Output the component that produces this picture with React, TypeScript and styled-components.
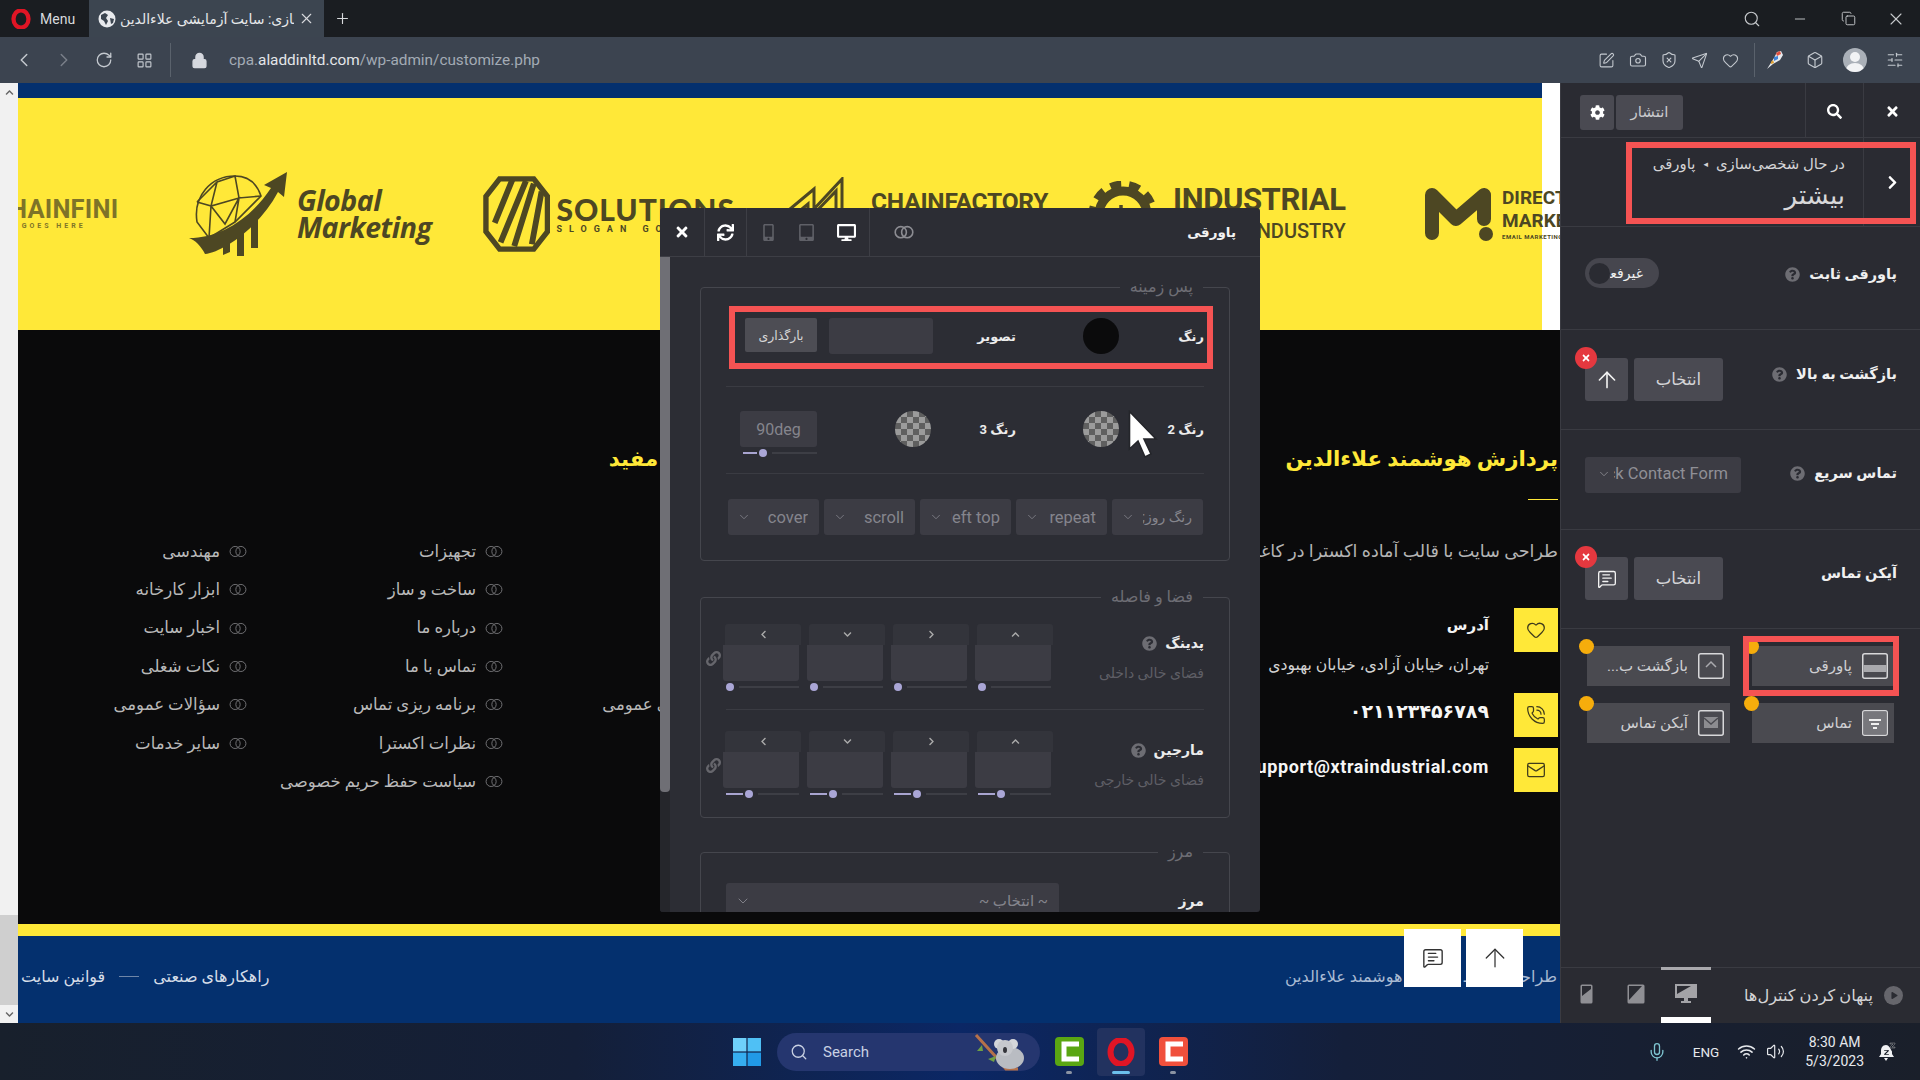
import React from "react";
import styled, { createGlobalStyle } from "styled-components";
import {
  Box,
  Camera,
  ChevronDown,
  ChevronLeft,
  ChevronRight,
  Copy,
  Heart,
  LayoutGrid,
  Lock,
  Mail,
  Mic,
  MessageSquareText,
  Minus,
  PhoneCall,
  Plus,
  RotateCw,
  Search,
  Send,
  ShieldX,
  SlidersHorizontal,
  SquarePen,
  ArrowUp,
  Volume2,
  Wifi,
  X,
} from "lucide-react";
import {
  FaChevronDown,
  FaChevronLeft,
  FaChevronRight,
  FaChevronUp,
  FaCog,
  FaDesktop,
  FaLink,
  FaMobileAlt,
  FaPlay,
  FaQuestionCircle,
  FaSearch,
  FaSync,
  FaTabletAlt,
  FaTimes,
} from "react-icons/fa";

const FONT = `Roboto, "DejaVu Sans", sans-serif`;

const GlobalStyle = createGlobalStyle`
  html, body {
    margin: 0;
    width: 1920px;
    height: 1080px;
    overflow: hidden;
    background: #1a1d21;
    font-family: ${FONT};
  }
  * { box-sizing: border-box; }
  ul { list-style: none; margin: 0; padding: 0; }
`;

const Screen = styled.div`
  width: 1920px;
  height: 1080px;
  display: flex;
  flex-direction: column;
`;

/* browser chrome */
const TabStrip = styled.div`
  height: 37px;
  flex: none;
  display: flex;
  background: #1a1d21;
  color: #d8dadd;
`;

const MenuButton = styled.div`
  width: 89px;
  display: flex;
  align-items: center;
  gap: 9px;
  padding-left: 11px;
  font-size: 14px;
`;

const Tab = styled.div`
  width: 235px;
  display: flex;
  align-items: center;
  background: #3c4550;
  padding: 0 9px;
  gap: 4px;
`;

const TabTitle = styled.span`
  flex: 1;
  min-width: 0;
  overflow: hidden;
  white-space: nowrap;
  font-size: 14px;
  color: #e6e8ea;
  text-align: left;
`;

const NewTab = styled.div`
  width: 36px;
  display: flex;
  align-items: center;
  justify-content: center;
`;

const WindowButtons = styled.div`
  margin-left: auto;
  display: flex;
`;

const WindowButton = styled.div`
  width: 48px;
  display: flex;
  align-items: center;
  justify-content: center;
  color: #c6c9cc;
`;

const AddressBar = styled.div`
  height: 46px;
  flex: none;
  display: flex;
  align-items: center;
  padding: 0 5px 0 4px;
  background: #3c4450;
  color: #c4c9cf;
`;

const NavCell = styled.div<{ $w?: number; $dim?: boolean }>`
  width: ${({ $w }) => $w ?? 40}px;
  height: 30px;
  flex: none;
  display: flex;
  align-items: center;
  justify-content: center;
  opacity: ${({ $dim }) => ($dim ? 0.45 : 1)};
`;

const BarDivider = styled.div<{ $ml: number }>`
  width: 1px;
  height: 34px;
  flex: none;
  margin-left: ${({ $ml }) => $ml}px;
  background: #5a626c;
`;

const LockWrap = styled.div`
  margin: 0 21px 0 20px;
  display: flex;
`;

const Url = styled.div`
  font-size: 15.35px;
  color: #a3abb5;
  b {
    font-weight: 400;
    color: #e4e6e9;
  }
`;

const AddressRight = styled.div`
  margin-left: auto;
  display: flex;
  align-items: center;
`;

const Avatar = styled.div`
  width: 24px;
  height: 24px;
  border-radius: 50%;
  background: #aab0b8;
  position: relative;
  overflow: hidden;
  &::before {
    content: "";
    position: absolute;
    left: 7px;
    top: 4px;
    width: 10px;
    height: 10px;
    border-radius: 50%;
    background: #f2f3f5;
  }
  &::after {
    content: "";
    position: absolute;
    left: 3px;
    top: 15px;
    width: 18px;
    height: 14px;
    border-radius: 50%;
    background: #f2f3f5;
  }
`;

/* page row */
const Workspace = styled.div`
  flex: 1;
  min-height: 0;
  display: flex;
`;

const PageScrollbar = styled.div`
  width: 18px;
  flex: none;
  display: flex;
  flex-direction: column;
  background: #f1f1f1;
  color: #666;
  font-size: 8px;
`;

const ScrollCap = styled.div`
  height: 18px;
  display: flex;
  align-items: center;
  justify-content: center;
`;

const ScrollTrack = styled.div`
  flex: 1;
  display: flex;
  flex-direction: column;
  justify-content: flex-end;
`;

const ScrollThumb = styled.div`
  height: 90px;
  background: #cfcfcf;
`;

const Preview = styled.div`
  width: 1542px;
  flex: none;
  position: relative;
  display: flex;
  flex-direction: column;
  overflow: hidden;
  background: #0a0a0b;
`;

const TopBand = styled.div`
  height: 247px;
  flex: none;
  background: #fff;
  padding-right: 18px;
  display: flex;
  flex-direction: column;
`;

const BlueStrip = styled.div`
  height: 15px;
  background: #04306e;
`;

const LogoStrip = styled.div`
  flex: 1;
  display: flex;
  align-items: center;
  background: #ffe838;
  color: #4d4723;
`;

const Logo = styled.div<{ $ml: number; $w: number; $faded?: boolean }>`
  flex: none;
  display: flex;
  align-items: center;
  margin-left: ${({ $ml }) => $ml}px;
  width: ${({ $w }) => $w}px;
  opacity: ${({ $faded }) => ($faded ? 0.72 : 1)};
`;

const LogoText = styled.div<{ $ml: number; $lift?: number }>`
  display: flex;
  flex-direction: column;
  white-space: nowrap;
  margin-left: ${({ $ml }) => $ml}px;
  margin-bottom: ${({ $lift }) => $lift ?? 0}px;
`;

const HainName = styled.span`
  font: 700 25.5px/24px "Roboto", sans-serif;
  letter-spacing: 0.2px;
`;

const Slogan = styled.span<{ $size?: number; $track?: number }>`
  font: 700 ${({ $size }) => $size ?? 7}px/10px "Roboto", sans-serif;
  letter-spacing: ${({ $track }) => $track ?? 3}px;
`;

const GlobalName = styled.span`
  font: italic 700 28.5px/27px "Open Sans", sans-serif;
  letter-spacing: -0.5px;
`;

const SolutionsName = styled.span`
  font: 900 30px/30px "Lato", sans-serif;
  letter-spacing: 1px;
`;

const FactoryName = styled.span`
  font: 700 24.5px/24px "Roboto", sans-serif;
  letter-spacing: -0.2px;
`;

const IndustrialName = styled.span`
  font: 700 31px/30px "Roboto", sans-serif;
  letter-spacing: -0.4px;
`;

const IndustrySub = styled.span`
  font: 500 20px/24px "Roboto", sans-serif;
  text-align: right;
  margin-top: 4px;
`;

const DirectName = styled.span`
  font: 700 19px/23px "Roboto", sans-serif;
`;

const MarkLift = styled.div<{ $lift: number }>`
  display: flex;
  margin-bottom: ${({ $lift }) => $lift}px;
`;

/* footer */
const FooterBody = styled.div`
  flex: 1;
  display: flex;
  direction: rtl;
  padding: 115px 2px 0 0;
  overflow: hidden;
`;

const InfoColumn = styled.div`
  width: 799px;
  flex: none;
`;

const LinksColumn = styled.div`
  flex: none;
  width: 740px;
`;

const FooterTitle = styled.h3`
  margin: 0;
  font-size: 21.3px;
  line-height: 28px;
  font-weight: 700;
  color: #ffe838;
  white-space: nowrap;
`;

const LinksTitle = styled(FooterTitle)`
  padding-right: 6px;
`;

const TitleRule = styled.div`
  width: 30px;
  height: 1px;
  margin-top: 26px;
  background: #ffe838;
`;

const Description = styled.p`
  margin: 39px 0 0;
  font-size: 17.5px;
  line-height: 24px;
  color: #b4b4b4;
  white-space: nowrap;
`;

const ContactRow = styled.div<{ $mt: number }>`
  display: flex;
  gap: 25px;
  margin-top: ${({ $mt }) => $mt}px;
`;

const ContactIcon = styled.div`
  width: 44px;
  height: 44px;
  flex: none;
  display: flex;
  align-items: center;
  justify-content: center;
  background: #ffe838;
  color: #3f3b1c;
`;

const ContactLabel = styled.div`
  font-size: 15px;
  line-height: 22px;
  margin-top: 6px;
  font-weight: 700;
  color: #f4f4f4;
  white-space: nowrap;
`;

const ContactValue = styled.div`
  font-size: 15.7px;
  line-height: 20px;
  margin-top: 19px;
  color: #d2d2d2;
  white-space: nowrap;
`;

const ContactStrong = styled.div<{ $size: number }>`
  font: 700 ${({ $size }) => $size}px/28px "Roboto", "DejaVu Sans", sans-serif;
  margin-top: 5px;
  letter-spacing: 0.6px;
  color: #f6f6f6;
  white-space: nowrap;
`;

const LinkLists = styled.div`
  display: flex;
  margin-top: 59px;
`;

const LinkList = styled.ul`
  width: 256px;
  flex: none;
`;

const LinkItem = styled.li`
  height: 38.4px;
  display: flex;
  align-items: center;
  gap: 9px;
  font-size: 16.5px;
  color: #b9b9b9;
  white-space: nowrap;
`;

const LinkBullet = styled.span`
  display: flex;
  color: #77777a;
`;

const YellowBand = styled.div`
  height: 12px;
  flex: none;
  background: #ffe838;
`;

const BottomBar = styled.div`
  height: 87px;
  flex: none;
  direction: rtl;
  display: flex;
  align-items: center;
  justify-content: space-between;
  padding: 0 3px 6px;
  background: #04306e;
  font-size: 16px;
  color: #a9bad3;
  white-space: nowrap;
`;

const BottomLinks = styled.div`
  display: flex;
  align-items: center;
  gap: 14px;
  color: #d6dde8;
`;

const BottomDash = styled.span`
  width: 20px;
  height: 1px;
  background: #6f86a8;
`;

const FloatButtons = styled.div`
  position: absolute;
  right: 37px;
  bottom: 36px;
  display: flex;
  gap: 5px;
`;

const FloatButton = styled.div`
  width: 57px;
  height: 58px;
  display: flex;
  align-items: center;
  justify-content: center;
  background: #fff;
  color: #333;
`;

/* floating editor */
const Dialog = styled.div`
  position: absolute;
  left: 642px;
  top: 125px;
  width: 600px;
  height: 704px;
  display: flex;
  flex-direction: column;
  overflow: hidden;
  border-radius: 3px;
  background: #2c2d34;
  color: #8a8a92;
`;

const DialogHeader = styled.div`
  height: 49px;
  flex: none;
  display: flex;
  align-items: stretch;
  border-bottom: 1px solid #3d3e45;
`;

const HeaderCell = styled.div<{ $w: number }>`
  width: ${({ $w }) => $w}px;
  flex: none;
  display: flex;
  align-items: center;
  justify-content: center;
  border-right: 1px solid #3d3e45;
  color: #fff;
`;

const DeviceGroup = styled.div`
  width: 123px;
  flex: none;
  display: flex;
  align-items: center;
  justify-content: space-around;
  padding: 0 2px;
  border-right: 1px solid #3d3e45;
`;

const DeviceIcon = styled.span<{ $on?: boolean }>`
  display: flex;
  color: ${({ $on }) => ($on ? "#fff" : "#5f6067")};
`;

const CompareWrap = styled.div`
  display: flex;
  align-items: center;
  margin-left: 24px;
  color: #8c8c92;
`;

const DialogTitle = styled.div`
  margin-left: auto;
  padding-right: 24px;
  display: flex;
  align-items: center;
  font-size: 13.5px;
  font-weight: 700;
  color: #f2f2f2;
`;

const DialogBody = styled.div`
  flex: 1;
  min-height: 0;
  display: flex;
`;

const DialogRail = styled.div`
  width: 10px;
  flex: none;
  background: #25262b;
`;

const RailThumb = styled.div`
  height: 535px;
  background: #6f6f75;
  border-radius: 0 0 4px 4px;
`;

const DialogContent = styled.div`
  flex: 1;
  min-width: 0;
  padding: 21px 30px 0;
  display: flex;
  flex-direction: column;
  gap: 27px;
  overflow: hidden;
  direction: rtl;
`;

const Group = styled.fieldset<{ $mt?: number }>`
  margin: ${({ $mt }) => $mt ?? 0}px 0 0;
  padding: 0 25px;
  min-width: 0;
  flex: none;
  border: 1px solid #45464d;
  border-radius: 4px;
`;

const GroupLegend = styled.legend`
  margin-right: 1px;
  padding: 0 10px;
  font-size: 16px;
  line-height: 18px;
  color: #6e6e75;
`;

const ColorRow = styled.div<{ $pt: number; $pb: number; $line?: boolean }>`
  display: grid;
  grid-template-columns: 188px 1fr;
  padding: ${({ $pt }) => $pt}px 0 ${({ $pb }) => $pb}px;
  border-bottom: ${({ $line }) => ($line ? "1px solid #3a3b42" : "none")};
`;

const Framed = styled.div`
  position: relative;
  grid-column: 1 / -1;
  display: grid;
  grid-template-columns: 188px 1fr;
`;

const RedFrame = styled.div<{ $t: number; $b: number; $l: number; $r: number }>`
  position: absolute;
  top: ${({ $t }) => $t}px;
  bottom: ${({ $b }) => $b}px;
  left: ${({ $l }) => $l}px;
  right: ${({ $r }) => $r}px;
  border: 6px solid #f55353;
  pointer-events: none;
  z-index: 3;
`;

const ColorCell = styled.div`
  display: flex;
  align-items: flex-start;
`;

const ColorLabel = styled.div<{ $w?: number }>`
  width: ${({ $w }) => $w ?? 85}px;
  flex: none;
  height: 36px;
  display: flex;
  align-items: center;
  font-size: 13px;
  font-weight: 700;
  color: #ececec;
  white-space: nowrap;
`;

const Swatch = styled.div<{ $empty?: boolean }>`
  width: 36px;
  height: 36px;
  flex: none;
  border-radius: 50%;
  background: ${({ $empty }) =>
    $empty ? "repeating-conic-gradient(#9b9b9b 0 25%, #5f5f5f 0 50%) 0 0 / 12px 12px" : "#0b0b0c"};
`;

const ImageField = styled.div`
  width: 104px;
  height: 36px;
  flex: none;
  border-radius: 3px;
  background: #3c3c44;
`;

const UploadButton = styled.div`
  width: 72px;
  height: 34px;
  margin-right: 12px;
  flex: none;
  display: flex;
  align-items: center;
  justify-content: center;
  border-radius: 2px;
  background: #4d4d54;
  font-size: 12.5px;
  color: #d6d6d6;
`;

const AngleBlock = styled.div`
  width: 77px;
  flex: none;
  margin-right: auto;
  margin-left: 14px;
`;

const AngleField = styled.div`
  height: 36px;
  display: flex;
  align-items: center;
  justify-content: center;
  border-radius: 3px;
  background: #3c3c44;
  font-size: 16px;
  color: #85858d;
`;

const SliderLine = styled.div`
  direction: ltr;
  display: flex;
  align-items: center;
  height: 8px;
  gap: 2px;
  margin-top: 2px;
  padding-left: 3px;
`;

const SliderFill = styled.span<{ $w: number }>`
  width: ${({ $w }) => $w}px;
  height: 2px;
  flex: none;
  background: #a8a4d0;
`;

const SliderThumb = styled.span`
  width: 8px;
  height: 8px;
  flex: none;
  border-radius: 50%;
  background: #aaa6d6;
`;

const SliderRest = styled.span`
  flex: 1;
  height: 2px;
  margin-left: 3px;
  background: #3d3e45;
`;

const SelectRow = styled.div`
  display: grid;
  grid-template-columns: repeat(5, 91px);
  gap: 5px;
  padding: 25px 1px 25px 3px;
`;

const SelectBox = styled.div`
  height: 36px;
  display: flex;
  align-items: center;
  gap: 8px;
  padding: 0 11px 0 9px;
  border-radius: 3px;
  background: #3c3c44;
  color: #85858d;
  font-size: 16.5px;
`;

const SelectText = styled.span<{ $size?: number }>`
  flex: 1;
  min-width: 0;
  overflow: hidden;
  white-space: nowrap;
  text-align: right;
  font-size: ${({ $size }) => ($size ? `${$size}px` : "inherit")};
`;

const SpacingRow = styled.div<{ $pt: number; $pb: number; $line?: boolean }>`
  display: flex;
  padding: ${({ $pt }) => $pt}px 0 ${({ $pb }) => $pb}px;
  border-bottom: ${({ $line }) => ($line ? "1px solid #3a3b42" : "none")};
`;

const SpacingLabel = styled.div`
  width: 153px;
  flex: none;
  padding-top: 7px;
`;

const LabelLine = styled.div`
  display: flex;
  align-items: center;
  gap: 8px;
  height: 24px;
  font-size: 14px;
  font-weight: 700;
  color: #ececec;
`;

const HelpDot = styled.span<{ $c?: string }>`
  display: flex;
  color: ${({ $c }) => $c ?? "#6d6d73"};
`;

const SubLabel = styled.div`
  margin-top: 8px;
  font-size: 14px;
  line-height: 20px;
  color: #5f5f66;
  white-space: nowrap;
`;

const SpacingCols = styled.div`
  display: flex;
  gap: 8px;
  position: relative;
`;

const SideCol = styled.div`
  width: 76px;
  flex: none;
`;

const SideTab = styled.div`
  height: 21px;
  margin: 0 -2px 0 2px;
  display: flex;
  align-items: center;
  justify-content: center;
  border-radius: 3px 3px 0 0;
  background: #33343b;
  color: #aaa;
`;

const SideInput = styled.div`
  height: 36px;
  border-radius: 0 0 3px 3px;
  background: #3c3c44;
`;

const LinkGlyph = styled.div`
  display: flex;
  align-items: flex-start;
  margin: 27px -6px 0 0;
  color: #66666c;
`;

const BorderRow = styled.div`
  display: flex;
  align-items: center;
  padding-top: 22px;
`;

const BorderLabel = styled.div`
  width: 145px;
  flex: none;
  font-size: 14px;
  font-weight: 700;
  color: #ececec;
`;

const BorderSelect = styled(SelectBox)`
  width: 336px;
  font-size: 15px;
`;

const Pointer = styled.svg`
  position: absolute;
  left: 1110px;
  top: 327px;
`;

/* side panel */
const Panel = styled.aside`
  width: 360px;
  flex: none;
  display: flex;
  flex-direction: column;
  direction: rtl;
  background: #2a2b32;
  color: #efefef;
  border-left: 1px solid #3a3b42;
`;

const PanelTop = styled.div`
  height: 55px;
  flex: none;
  display: flex;
  border-bottom: 1px solid #3a3b42;
`;

const TopCell = styled.div<{ $w: number; $pt?: number }>`
  width: ${({ $w }) => $w}px;
  flex: none;
  display: flex;
  align-items: center;
  justify-content: center;
  padding-top: ${({ $pt }) => $pt ?? 0}px;
  border-left: 1px solid #3a3b42;
  color: #fff;
`;

const PublishGroup = styled.div`
  margin-right: auto;
  padding: 4px 0 0 19px;
  direction: ltr;
  display: flex;
  align-items: center;
  gap: 2px;
`;

const GearButton = styled.div`
  width: 34px;
  height: 35px;
  display: flex;
  align-items: center;
  justify-content: center;
  border-radius: 3px;
  background: #4a4a52;
  color: #fff;
`;

const PublishButton = styled.div`
  width: 67px;
  height: 35px;
  display: flex;
  align-items: center;
  justify-content: center;
  border-radius: 3px;
  background: #4a4a52;
  font-size: 15px;
  color: #c9c9cc;
`;

const Crumb = styled.div`
  height: 89px;
  flex: none;
  position: relative;
  display: flex;
  border-bottom: 1px solid #3a3b42;
`;

const CrumbText = styled.div`
  padding: 16px 18px 0 0;
`;

const CrumbPath = styled.div`
  display: flex;
  align-items: center;
  gap: 8px;
  font-size: 14.9px;
  line-height: 20px;
  color: #d4d4d6;
`;

const CrumbMarker = styled.span`
  font-size: 9px;
`;

const CrumbTitle = styled.div`
  font-size: 26px;
  line-height: 36px;
  margin-top: 3px;
  color: #d8d8da;
`;

const Row = styled.div<{ $h: number; $pt: number }>`
  height: ${({ $h }) => $h}px;
  flex: none;
  display: flex;
  align-items: flex-start;
  justify-content: space-between;
  padding: ${({ $pt }) => $pt}px 23px 0 24px;
  border-bottom: 1px solid #3a3b42;
`;

const RowLabel = styled.div`
  display: flex;
  align-items: center;
  gap: 9px;
  height: 32px;
  font-size: 14.5px;
  font-weight: 700;
  color: #f0f0f0;
  white-space: nowrap;
`;

const Toggle = styled.div`
  width: 74px;
  height: 30px;
  direction: ltr;
  display: flex;
  align-items: center;
  overflow: hidden;
  border-radius: 15px;
  padding-left: 4px;
  background: #46464e;
`;

const ToggleKnob = styled.span`
  width: 21px;
  height: 21px;
  flex: none;
  border-radius: 50%;
  background: #2a2b32;
`;

const ToggleText = styled.span`
  flex: 1;
  min-width: 0;
  overflow: hidden;
  direction: rtl;
  padding-right: 16px;
  font-size: 14px;
  white-space: nowrap;
  text-align: right;
  color: #f0f0f0;
`;

const PickGroup = styled.div`
  display: flex;
  gap: 6px;
`;

const PickButton = styled.div`
  width: 89px;
  height: 43px;
  display: flex;
  align-items: center;
  justify-content: center;
  border-radius: 3px;
  background: #4a4a52;
  font-size: 16.5px;
  color: #d5d5d8;
`;

const PickIcon = styled.div`
  width: 43px;
  height: 43px;
  position: relative;
  display: flex;
  align-items: center;
  justify-content: center;
  border-radius: 3px;
  background: #4a4a52;
  color: #f2f2f2;
`;

const RemoveBadge = styled.span`
  position: absolute;
  left: -10px;
  top: -11px;
  width: 22px;
  height: 22px;
  display: flex;
  align-items: center;
  justify-content: center;
  border-radius: 50%;
  background: #e5383f;
  color: #fff;
`;

const PanelSelect = styled.div`
  width: 156px;
  height: 36px;
  display: flex;
  align-items: center;
  gap: 3px;
  padding: 0 13px 3px 12px;
  overflow: hidden;
  border-radius: 3px;
  background: #3c3c44;
  color: #8f8f96;
  font-size: 16.5px;
`;

const CardGrid = styled.div`
  display: grid;
  grid-template-columns: 142px 143px;
  column-gap: 22px;
  row-gap: 17px;
  padding: 17px 26px 0 0;
`;

const Card = styled.div`
  height: 40px;
  position: relative;
  display: flex;
  align-items: center;
  gap: 10px;
  padding-right: 6px;
  background: #4a4a50;
  font-size: 15px;
  color: #cfcfd2;
  white-space: nowrap;
`;

const CardDot = styled.span`
  position: absolute;
  left: -8px;
  top: -7px;
  width: 15px;
  height: 15px;
  border-radius: 50%;
  background: #f6ad0c;
`;

const CardIcon = styled.svg`
  flex: none;
`;

const PanelFoot = styled.div`
  margin-top: auto;
  height: 56px;
  flex: none;
  display: flex;
  align-items: stretch;
  border-top: 1px solid #3a3b42;
`;

const HideControls = styled.div`
  display: flex;
  align-items: center;
  gap: 11px;
  padding-right: 17px;
  font-size: 16.2px;
  color: #d4d4d6;
  white-space: nowrap;
`;

const PlayDot = styled.span`
  width: 19px;
  height: 19px;
  display: flex;
  align-items: center;
  justify-content: center;
  border-radius: 50%;
  background: #66666c;
  color: #2a2b32;
`;

const PlayGlyph = styled(FaPlay)`
  transform: translateX(1px);
`;

const FootTabs = styled.div`
  margin-right: auto;
  direction: ltr;
  display: flex;
`;

const FootTab = styled.div<{ $on?: boolean }>`
  width: 50px;
  display: flex;
  align-items: center;
  justify-content: center;
  margin-top: ${({ $on }) => ($on ? "-1px" : "0")};
  border-top: 3px solid ${({ $on }) => ($on ? "#a9a9ad" : "transparent")};
  border-bottom: 6px solid ${({ $on }) => ($on ? "#fff" : "transparent")};
`;

/* windows taskbar */
const Taskbar = styled.div`
  height: 57px;
  flex: none;
  display: grid;
  grid-template-columns: 1fr auto 1fr;
  align-items: center;
  background: linear-gradient(90deg, #18202c 0%, #141f38 30%, #0b2765 50%, #141f3a 70%, #1a1f2a 100%);
  color: #e6e8ec;
`;

const TaskCenter = styled.div`
  grid-column: 2;
  display: flex;
  align-items: center;
  margin-left: 12px;
`;

const SearchPill = styled.div`
  width: 263px;
  height: 38px;
  margin: 0 3px 0 16px;
  display: flex;
  align-items: center;
  gap: 15px;
  padding-left: 13px;
  border-radius: 19px;
  background: #25366f;
  color: #c9d1e3;
  font-size: 15px;
`;

const Koala = styled.svg`
  margin-left: auto;
  margin-right: 12px;
`;

const AppSlot = styled.div<{ $on?: boolean }>`
  width: 48px;
  height: 48px;
  margin: 0 2px;
  position: relative;
  display: flex;
  align-items: center;
  justify-content: center;
  border-radius: 4px;
  background: ${({ $on }) => ($on ? "#22325f" : "transparent")};
  &::after {
    content: "";
    position: absolute;
    bottom: 2px;
    left: 50%;
    width: ${({ $on }) => ($on ? 18 : 6)}px;
    height: 3px;
    margin-left: ${({ $on }) => ($on ? -9 : -3)}px;
    border-radius: 2px;
    background: ${({ $on }) => ($on ? "#6cc0ec" : "#8b93a3")};
  }
`;

const TaskTray = styled.div`
  display: flex;
  align-items: center;
  justify-content: flex-end;
  padding-right: 24px;
`;

const LangText = styled.span`
  margin: 0 18px 0 26px;
  font-size: 13.5px;
`;

const Clock = styled.div`
  margin: 0 14px 0 20px;
  font-size: 14px;
  line-height: 19px;
  text-align: center;
`;

const MicGlyph = styled.span`
  display: flex;
  color: #7ec4d0;
`;

const TrayIcon = styled.span<{ $ml?: number }>`
  display: flex;
  margin-left: ${({ $ml }) => $ml ?? 0}px;
`;

const CompareIcon = ({ size = 18, weight = 2 }: { size?: number; weight?: number }) => (
  <svg width={size} height={size * 0.72} viewBox="0 0 25 18" fill="none" stroke="currentColor" strokeWidth={weight}>
    <circle cx="8.5" cy="9" r="7" />
    <circle cx="16.5" cy="9" r="7" />
  </svg>
);

const OperaIcon = ({ size }: { size: number }) => (
  <svg width={size} height={size} viewBox="0 0 28 28">
    <ellipse cx="14" cy="14" rx="10.5" ry="12" fill="none" stroke="#e01525" strokeWidth="6" />
  </svg>
);

const CamtasiaIcon = ({ bg }: { bg: string }) => (
  <svg width="29" height="29" viewBox="0 0 29 29">
    <rect width="29" height="29" rx="4" fill={bg} />
    <path d="M24 7H9v15h15" fill="none" stroke="#fff" strokeWidth="5" />
  </svg>
);

const WindowsIcon = () => (
  <svg width="28" height="28" viewBox="0 0 28 28">
    <rect width="13.4" height="13.4" fill="#6fd0fa" />
    <rect x="14.6" width="13.4" height="13.4" fill="#4fc0f5" />
    <rect y="14.6" width="13.4" height="13.4" fill="#36aef0" />
    <rect x="14.6" y="14.6" width="13.4" height="13.4" fill="#2199e6" />
  </svg>
);

const KoalaIcon = () => (
  <Koala width="54" height="38" viewBox="0 0 54 38">
    <path d="M2 2 L22 24 L32 36 L44 36" fill="none" stroke="#b5714a" strokeWidth="3" />
    <path d="M3 18l5-6 1 6zM14 26l8-3-2 6z" fill="#6f9f45" />
    <ellipse cx="36" cy="25" rx="14" ry="11" fill="#b9bcc2" />
    <circle cx="25" cy="11" r="5" fill="#d4d6da" />
    <circle cx="39" cy="11" r="5" fill="#d4d6da" />
    <circle cx="31" cy="15" r="8" fill="#c6c8cd" />
    <ellipse cx="31" cy="17" rx="2" ry="3" fill="#33343a" />
  </Koala>
);

const GlobalMark = () => (
  <svg width="100" height="84" viewBox="0 0 100 84" fill="none" stroke="currentColor">
    <g strokeWidth="1.6">
      <path d="M10 50C6 24 24 4 48 4c14 0 22 8 26 20L48 50 22 66z" />
      <path d="M10 30L30 10 48 4 52 26 74 24M30 10l-6 24 28-8-14 26-14-18-14-4M24 34L22 66M52 26l-4 24" />
    </g>
    <path d="M2 66C34 66 64 46 84 16l-7-3L100 0l-3 25-6-5C72 56 36 80 18 82c-4-8-10-14-16-16z" fill="currentColor" stroke="none" />
    <path d="M36 66h7v14l-7 3zM50 58h7v26h-7zM64 46h7v30h-7z" fill="currentColor" stroke="none" />
  </svg>
);

const SolutionsMark = () => (
  <svg width="69" height="78" viewBox="0 0 69 78" fill="none" stroke="currentColor">
    <path d="M17 3h35l14 18v36L52 75H17L3 57V21z" strokeWidth="5.5" />
    <path d="M30 4L12 48M44 5L18 68M52 8L32 72M60 16L50 70" strokeWidth="6" />
  </svg>
);

const FactoryMark = () => (
  <svg width="58" height="66" viewBox="0 0 58 66" fill="none" stroke="currentColor" strokeWidth="3">
    <path d="M2 64V32L26 12v20L54 2v62z" />
    <path d="M9 64V36L20 27v16L48 14v50" />
  </svg>
);

const GearMark = () => (
  <svg width="68" height="66" viewBox="0 0 68 66" fill="none" stroke="currentColor">
    <circle cx="34" cy="34" r="24" strokeWidth="9" />
    <circle cx="34" cy="34" r="31" strokeWidth="7" strokeDasharray="11 8" />
    <path d="M24 42V30M32 42V24M40 42V32M46 42V36" strokeWidth="3.5" />
  </svg>
);

const DirectMark = () => (
  <svg width="70" height="54" viewBox="0 0 70 54">
    <path d="M8 46V8L32 32 60 8v24" fill="none" stroke="currentColor" strokeWidth="14" strokeLinecap="round" strokeLinejoin="round" />
    <circle cx="62" cy="47" r="7" fill="currentColor" />
  </svg>
);

const PhoneWedge = () => (
  <svg width="13" height="20" viewBox="0 0 13 20">
    <rect x="0.5" y="0.5" width="12" height="19" rx="1.5" fill="#8f8f94" />
    <path d="M2 2h9v3L2 12z" fill="#2a2b32" />
  </svg>
);

const TabletWedge = () => (
  <svg width="18" height="20" viewBox="0 0 18 20">
    <rect x="0.5" y="0.5" width="17" height="19" rx="1.5" fill="#8f8f94" />
    <path d="M2 2h13L2 16z" fill="#2a2b32" />
  </svg>
);

const DesktopWedge = () => (
  <svg width="22" height="21" viewBox="0 0 22 21">
    <path d="M0 1h22v14H0zM9 15h4v3h3v2H6v-2h3z" fill="#a3a3a7" />
    <path d="M2 3h14L2 11z" fill="#2a2b32" />
  </svg>
);

const FrameIcon = ({ children }: { children: React.ReactNode }) => (
  <CardIcon width="26" height="26" viewBox="0 0 26 26" fill="none">
    <rect x="0.75" y="0.75" width="24.5" height="24.5" rx="2" stroke="#d8d8da" strokeWidth="1.5" />
    {children}
  </CardIcon>
);

const columnA = ["محصولات", "", "", "", "پرسش‌های عمومی", "تماس با ما"];
const columnB = ["تجهیزات", "ساخت و ساز", "درباره ما", "تماس با ما", "برنامه ریزی تماس", "نظرات اکسترا", "سیاست حفظ حریم خصوصی"];
const columnC = ["مهندسی", "ابزار کارخانه", "اخبار سایت", "نکات شغلی", "سؤالات عمومی", "سایر خدمات"];

const LinkColumn = ({ items }: { items: string[] }) => (
  <LinkList>
    {items.map((item, i) => (
      <LinkItem key={i}>
        <LinkBullet>
          <CompareIcon size={18} weight={1.3} />
        </LinkBullet>
        {item}
      </LinkItem>
    ))}
  </LinkList>
);

const Slider = ({ fill }: { fill: number }) => (
  <SliderLine>
    {fill > 0 && <SliderFill $w={fill} />}
    <SliderThumb />
    <SliderRest />
  </SliderLine>
);

const sideIcons = [FaChevronUp, FaChevronRight, FaChevronDown, FaChevronLeft];

const SpacingControls = ({ fill }: { fill: number }) => (
  <SpacingCols>
    {sideIcons.map((Icon, i) => (
      <SideCol key={i}>
        <SideTab>
          <Icon size={9} />
        </SideTab>
        <SideInput />
        <Slider fill={fill} />
      </SideCol>
    ))}
    <LinkGlyph>
      <FaLink size={15} />
    </LinkGlyph>
  </SpacingCols>
);

const FieldSelect = ({ text, size }: { text: string; size?: number }) => (
  <SelectBox>
    <SelectText $size={size}>{text}</SelectText>
    <ChevronDown size={14} strokeWidth={1.4} />
  </SelectBox>
);

const App: React.FC = () => {
  return (
    <Screen>
      <GlobalStyle />
      <TabStrip>
        <MenuButton>
          <OperaIcon size={20} />
          Menu
        </MenuButton>
        <Tab>
          <svg width="18" height="18" viewBox="0 0 18 18">
            <circle cx="9" cy="9" r="8.5" fill="#e8eaed" />
            <path d="M3 5l4-2 3 2-2 3 2 3-2 4-2-4-3-2zM12 8l4 1-1 4-2 1z" fill="#3c4550" />
          </svg>
          <TabTitle>شخصی‌سازی: سایت آزمایشی علاءالدین</TabTitle>
          <X size={17} strokeWidth={1.6} />
        </Tab>
        <NewTab>
          <Plus size={17} strokeWidth={1.6} />
        </NewTab>
        <WindowButtons>
          <WindowButton>
            <Search size={18} strokeWidth={1.5} />
          </WindowButton>
          <WindowButton>
            <Minus size={16} strokeWidth={1.4} />
          </WindowButton>
          <WindowButton>
            <Copy size={15} strokeWidth={1.5} />
          </WindowButton>
          <WindowButton>
            <X size={20} strokeWidth={1.3} />
          </WindowButton>
        </WindowButtons>
      </TabStrip>

      <AddressBar>
        <NavCell>
          <ChevronLeft size={22} strokeWidth={1.6} />
        </NavCell>
        <NavCell $dim>
          <ChevronRight size={22} strokeWidth={1.6} />
        </NavCell>
        <NavCell>
          <RotateCw size={18} strokeWidth={1.7} />
        </NavCell>
        <NavCell>
          <LayoutGrid size={17} strokeWidth={1.6} />
        </NavCell>
        <BarDivider $ml={6} />
        <LockWrap>
          <Lock size={17} fill="#d5d8de" strokeWidth={2} color="#d5d8de" />
        </LockWrap>
        <Url>
          cpa.<b>aladdinltd.com</b>/wp-admin/customize.php
        </Url>
        <AddressRight>
          <NavCell $w={31}>
            <SquarePen size={17} strokeWidth={1.5} />
          </NavCell>
          <NavCell $w={31}>
            <Camera size={18} strokeWidth={1.5} />
          </NavCell>
          <NavCell $w={31}>
            <ShieldX size={18} strokeWidth={1.5} />
          </NavCell>
          <NavCell $w={31}>
            <Send size={17} strokeWidth={1.5} />
          </NavCell>
          <NavCell $w={31}>
            <Heart size={17} strokeWidth={1.5} />
          </NavCell>
          <BarDivider $ml={8} />
          <NavCell>
            <svg width="18" height="20" viewBox="0 0 18 20">
              <path d="M1 19L8 8l3-6 4-1 2 4-3 5-7 4z" fill="#e8eaed" />
              <path d="M10 3l4-2 1 3-4 2z" fill="#e0503f" />
              <path d="M8 7l4-1 0 3-4 2z" fill="#3f83d8" />
              <path d="M5 12l2-2 1 3-3 1z" fill="#e0a030" />
            </svg>
          </NavCell>
          <NavCell>
            <Box size={18} strokeWidth={1.5} />
          </NavCell>
          <NavCell>
            <Avatar />
          </NavCell>
          <NavCell>
            <SlidersHorizontal size={18} strokeWidth={1.5} />
          </NavCell>
        </AddressRight>
      </AddressBar>

      <Workspace>
        <PageScrollbar>
          <ScrollCap>
            <FaChevronUp size={9} />
          </ScrollCap>
          <ScrollTrack>
            <ScrollThumb />
          </ScrollTrack>
          <ScrollCap>
            <FaChevronDown size={9} />
          </ScrollCap>
        </PageScrollbar>

        <Preview>
          <TopBand>
            <BlueStrip />
            <LogoStrip>
              <Logo $ml={-9} $w={109} $faded>
                <LogoText $ml={0}>
                  <HainName>HAINFINI</HainName>
                  <Slogan>N GOES HERE</Slogan>
                </LogoText>
              </Logo>
              <Logo $ml={69} $w={245}>
                <GlobalMark />
                <LogoText $ml={10}>
                  <GlobalName>Global</GlobalName>
                  <GlobalName>Marketing</GlobalName>
                </LogoText>
              </Logo>
              <Logo $ml={51} $w={252}>
                <SolutionsMark />
                <LogoText $ml={6}>
                  <SolutionsName>SOLUTIONS</SolutionsName>
                  <Slogan $size={9} $track={7}>SLOGAN GOES</Slogan>
                </LogoText>
              </Logo>
              <Logo $ml={53} $w={259}>
                <MarkLift $lift={8}>
                  <FactoryMark />
                </MarkLift>
                <LogoText $ml={25} $lift={24}>
                  <FactoryName>CHAINFACTORY</FactoryName>
                </LogoText>
              </Logo>
              <Logo $ml={42} $w={258}>
                <GearMark />
                <LogoText $ml={16}>
                  <IndustrialName>INDUSTRIAL</IndustrialName>
                  <IndustrySub>INDUSTRY</IndustrySub>
                </LogoText>
              </Logo>
              <Logo $ml={77} $w={200}>
                <DirectMark />
                <LogoText $ml={8}>
                  <DirectName>DIRECT</DirectName>
                  <DirectName>MARKETING</DirectName>
                  <Slogan $size={6} $track={0.5}>EMAIL MARKETING</Slogan>
                </LogoText>
              </Logo>
            </LogoStrip>
          </TopBand>

          <FooterBody>
            <InfoColumn>
              <FooterTitle>پردازش هوشمند علاءالدین</FooterTitle>
              <TitleRule />
              <Description>طراحی سایت با قالب آماده اکسترا در کاغذ دیواری صنعتی</Description>
              <ContactRow $mt={45}>
                <ContactIcon>
                  <Heart size={20} strokeWidth={1.5} />
                </ContactIcon>
                <div>
                  <ContactLabel>آدرس</ContactLabel>
                  <ContactValue>تهران، خیابان آزادی، خیابان بهبودی</ContactValue>
                </div>
              </ContactRow>
              <ContactRow $mt={18}>
                <ContactIcon>
                  <PhoneCall size={20} strokeWidth={1.5} />
                </ContactIcon>
                <ContactStrong $size={19}>۰۲۱۱۲۳۴۵۶۷۸۹</ContactStrong>
              </ContactRow>
              <ContactRow $mt={11}>
                <ContactIcon>
                  <Mail size={20} strokeWidth={1.5} />
                </ContactIcon>
                <ContactStrong $size={18}>support@xtraindustrial.com</ContactStrong>
              </ContactRow>
            </InfoColumn>
            <LinksColumn>
              <LinksTitle>لینک‌های مفید</LinksTitle>
              <LinkLists>
                <LinkColumn items={columnA} />
                <LinkColumn items={columnB} />
                <LinkColumn items={columnC} />
              </LinkLists>
            </LinksColumn>
          </FooterBody>

          <YellowBand />
          <BottomBar>
            <span>طراحی توسط پردازش هوشمند علاءالدین</span>
            <BottomLinks>
              <span>راهکارهای صنعتی</span>
              <BottomDash />
              <span>قوانین سایت</span>
            </BottomLinks>
          </BottomBar>

          <FloatButtons>
            <FloatButton>
              <MessageSquareText size={22} strokeWidth={1.5} />
            </FloatButton>
            <FloatButton>
              <ArrowUp size={30} strokeWidth={1} />
            </FloatButton>
          </FloatButtons>

          <Dialog>
            <DialogHeader>
              <HeaderCell $w={45}>
                <FaTimes size={16} />
              </HeaderCell>
              <HeaderCell $w={42}>
                <FaSync size={17} />
              </HeaderCell>
              <DeviceGroup>
                <DeviceIcon>
                  <FaMobileAlt size={17} />
                </DeviceIcon>
                <DeviceIcon>
                  <FaTabletAlt size={17} />
                </DeviceIcon>
                <DeviceIcon $on>
                  <FaDesktop size={19} />
                </DeviceIcon>
              </DeviceGroup>
              <CompareWrap>
                <CompareIcon size={20} />
              </CompareWrap>
              <DialogTitle>پاورقی</DialogTitle>
            </DialogHeader>
            <DialogBody>
              <DialogRail>
                <RailThumb />
              </DialogRail>
              <DialogContent>
                <Group>
                  <GroupLegend>پس زمینه</GroupLegend>
                  <ColorRow $pt={22} $pb={32} $line>
                    <Framed>
                      <RedFrame $t={-12} $b={-15} $l={3} $r={-9} />
                      <ColorCell>
                        <ColorLabel>رنگ</ColorLabel>
                        <Swatch />
                      </ColorCell>
                      <ColorCell>
                        <ColorLabel $w={83}>تصویر</ColorLabel>
                        <ImageField />
                        <UploadButton>بارگذاری</UploadButton>
                      </ColorCell>
                    </Framed>
                  </ColorRow>
                  <ColorRow $pt={24} $pb={16} $line>
                    <ColorCell>
                      <ColorLabel>رنگ 2</ColorLabel>
                      <Swatch $empty />
                    </ColorCell>
                    <ColorCell>
                      <ColorLabel>رنگ 3</ColorLabel>
                      <Swatch $empty />
                      <AngleBlock>
                        <AngleField>90deg</AngleField>
                        <Slider fill={14} />
                      </AngleBlock>
                    </ColorCell>
                  </ColorRow>
                  <SelectRow>
                    <FieldSelect text="رنگ روز;" size={14} />
                    <FieldSelect text="repeat" />
                    <FieldSelect text="left top" />
                    <FieldSelect text="scroll" />
                    <FieldSelect text="cover" />
                  </SelectRow>
                </Group>

                <Group>
                  <GroupLegend>فضا و فاصله</GroupLegend>
                  <SpacingRow $pt={18} $pb={18} $line>
                    <SpacingLabel>
                      <LabelLine>
                        پدینگ
                        <HelpDot>
                          <FaQuestionCircle size={15} />
                        </HelpDot>
                      </LabelLine>
                      <SubLabel>فضای خالی داخلی</SubLabel>
                    </SpacingLabel>
                    <SpacingControls fill={0} />
                  </SpacingRow>
                  <SpacingRow $pt={21} $pb={19}>
                    <SpacingLabel>
                      <LabelLine>
                        مارجین
                        <HelpDot>
                          <FaQuestionCircle size={15} />
                        </HelpDot>
                      </LabelLine>
                      <SubLabel>فضای خالی خارجی</SubLabel>
                    </SpacingLabel>
                    <SpacingControls fill={17} />
                  </SpacingRow>
                </Group>

                <Group $mt={-2}>
                  <GroupLegend>مرز</GroupLegend>
                  <BorderRow>
                    <BorderLabel>مرز</BorderLabel>
                    <BorderSelect>
                      <SelectText>~ انتخاب ~</SelectText>
                      <ChevronDown size={16} strokeWidth={1.4} />
                    </BorderSelect>
                  </BorderRow>
                </Group>
              </DialogContent>
            </DialogBody>
          </Dialog>

          <Pointer width="30" height="48" viewBox="0 0 30 48">
            <path d="M1.5 1.5V39l8.5-8 7 16 6-3-7-15h12z" fill="#fff" stroke="#24252a" strokeWidth="1.6" />
          </Pointer>
        </Preview>

        <Panel>
          <PanelTop>
            <TopCell $w={57} $pt={3}>
              <FaTimes size={15} />
            </TopCell>
            <TopCell $w={58} $pt={3}>
              <FaSearch size={15} />
            </TopCell>
            <PublishGroup>
              <GearButton>
                <FaCog size={15} />
              </GearButton>
              <PublishButton>انتشار</PublishButton>
            </PublishGroup>
          </PanelTop>

          <Crumb>
            <TopCell $w={57}>
              <FaChevronRight size={15} />
            </TopCell>
            <CrumbText>
              <CrumbPath>
                در حال شخصی‌سازی
                <CrumbMarker>◂</CrumbMarker>
                پاورقی
              </CrumbPath>
              <CrumbTitle>بیشتر</CrumbTitle>
            </CrumbText>
            <RedFrame $t={4} $b={2} $l={65} $r={4} />
          </Crumb>

          <Row $h={103} $pt={31}>
            <RowLabel>
              پاورقی ثابت
              <HelpDot>
                <FaQuestionCircle size={15} />
              </HelpDot>
            </RowLabel>
            <Toggle>
              <ToggleKnob />
              <ToggleText>غیرفعال</ToggleText>
            </Toggle>
          </Row>

          <Row $h={100} $pt={28}>
            <RowLabel>
              بازگشت به بالا
              <HelpDot>
                <FaQuestionCircle size={15} />
              </HelpDot>
            </RowLabel>
            <PickGroup>
              <PickButton>انتخاب</PickButton>
              <PickIcon>
                <ArrowUp size={26} strokeWidth={1.5} />
                <RemoveBadge>
                  <FaTimes size={10} />
                </RemoveBadge>
              </PickIcon>
            </PickGroup>
          </Row>

          <Row $h={100} $pt={27}>
            <RowLabel>
              تماس سریع
              <HelpDot>
                <FaQuestionCircle size={15} />
              </HelpDot>
            </RowLabel>
            <PanelSelect>
              <SelectText>Quick Contact Form</SelectText>
              <ChevronDown size={14} strokeWidth={1.4} />
            </PanelSelect>
          </Row>

          <Row $h={99} $pt={27}>
            <RowLabel>آیکن تماس</RowLabel>
            <PickGroup>
              <PickButton>انتخاب</PickButton>
              <PickIcon>
                <MessageSquareText size={20} strokeWidth={1.6} />
                <RemoveBadge>
                  <FaTimes size={10} />
                </RemoveBadge>
              </PickIcon>
            </PickGroup>
          </Row>

          <CardGrid>
            <Card>
              <CardDot />
              <FrameIcon>
                <rect x="1.5" y="12" width="23" height="7" fill="#a9a9ad" />
              </FrameIcon>
              پاورقی
              <RedFrame $t={-10} $b={-10} $l={-9} $r={-5} />
            </Card>
            <Card>
              <CardDot />
              <FrameIcon>
                <path d="M8 9l5-5 5 5" transform="translate(0 5)" stroke="#a9a9ad" strokeWidth="1.5" />
              </FrameIcon>
              بازگشت ب...
            </Card>
            <Card>
              <CardDot />
              <FrameIcon>
                <rect x="1.5" y="1.5" width="23" height="23" fill="#77777c" />
                <path d="M7 10h12M9 14h8M11 18h4" stroke="#efefef" strokeWidth="1.8" />
              </FrameIcon>
              تماس
            </Card>
            <Card>
              <CardDot />
              <FrameIcon>
                <rect x="6" y="7" width="14" height="11" fill="#8c8c90" />
                <path d="M6 8l7 6 7-6" stroke="#4a4a50" strokeWidth="1.4" />
              </FrameIcon>
              آیکن تماس
            </Card>
          </CardGrid>

          <PanelFoot>
            <HideControls>
              <PlayDot>
                <PlayGlyph size={7} />
              </PlayDot>
              پنهان کردن کنترل‌ها
            </HideControls>
            <FootTabs>
              <FootTab>
                <PhoneWedge />
              </FootTab>
              <FootTab>
                <TabletWedge />
              </FootTab>
              <FootTab $on>
                <DesktopWedge />
              </FootTab>
            </FootTabs>
          </PanelFoot>
        </Panel>
      </Workspace>

      <Taskbar>
        <TaskCenter>
          <WindowsIcon />
          <SearchPill>
            <Search size={18} strokeWidth={1.7} />
            Search
            <KoalaIcon />
          </SearchPill>
          <AppSlot>
            <CamtasiaIcon bg="#5aa612" />
          </AppSlot>
          <AppSlot $on>
            <OperaIcon size={28} />
          </AppSlot>
          <AppSlot>
            <CamtasiaIcon bg="#f0503c" />
          </AppSlot>
        </TaskCenter>
        <TaskTray>
          <MicGlyph>
            <Mic size={20} strokeWidth={1.6} />
          </MicGlyph>
          <LangText>ENG</LangText>
          <TrayIcon>
            <Wifi size={19} strokeWidth={2} />
          </TrayIcon>
          <TrayIcon $ml={10}>
            <Volume2 size={19} strokeWidth={1.5} />
          </TrayIcon>
          <Clock>
            <div>8:30 AM</div>
            <div>5/3/2023</div>
          </Clock>
          <svg width="18" height="20" viewBox="0 0 18 20" fill="#f0f1f3">
            <path d="M8 3C4.5 3 3 6 3 9v3l-2 3h15l-2-3V9.500C12 6 11 3 8 3zM6 16h4l-2 3z" />
            <path d="M12 1h5v1l-3 3h3v1h-5V5l3-3h-3zM6 8h5v1l-3 3h3v1H6v-1l3-3H6z" fill="#1a1f2a" stroke="#f0f1f3" strokeWidth="0.3" />
          </svg>
        </TaskTray>
      </Taskbar>
    </Screen>
  );
};

export default App;
